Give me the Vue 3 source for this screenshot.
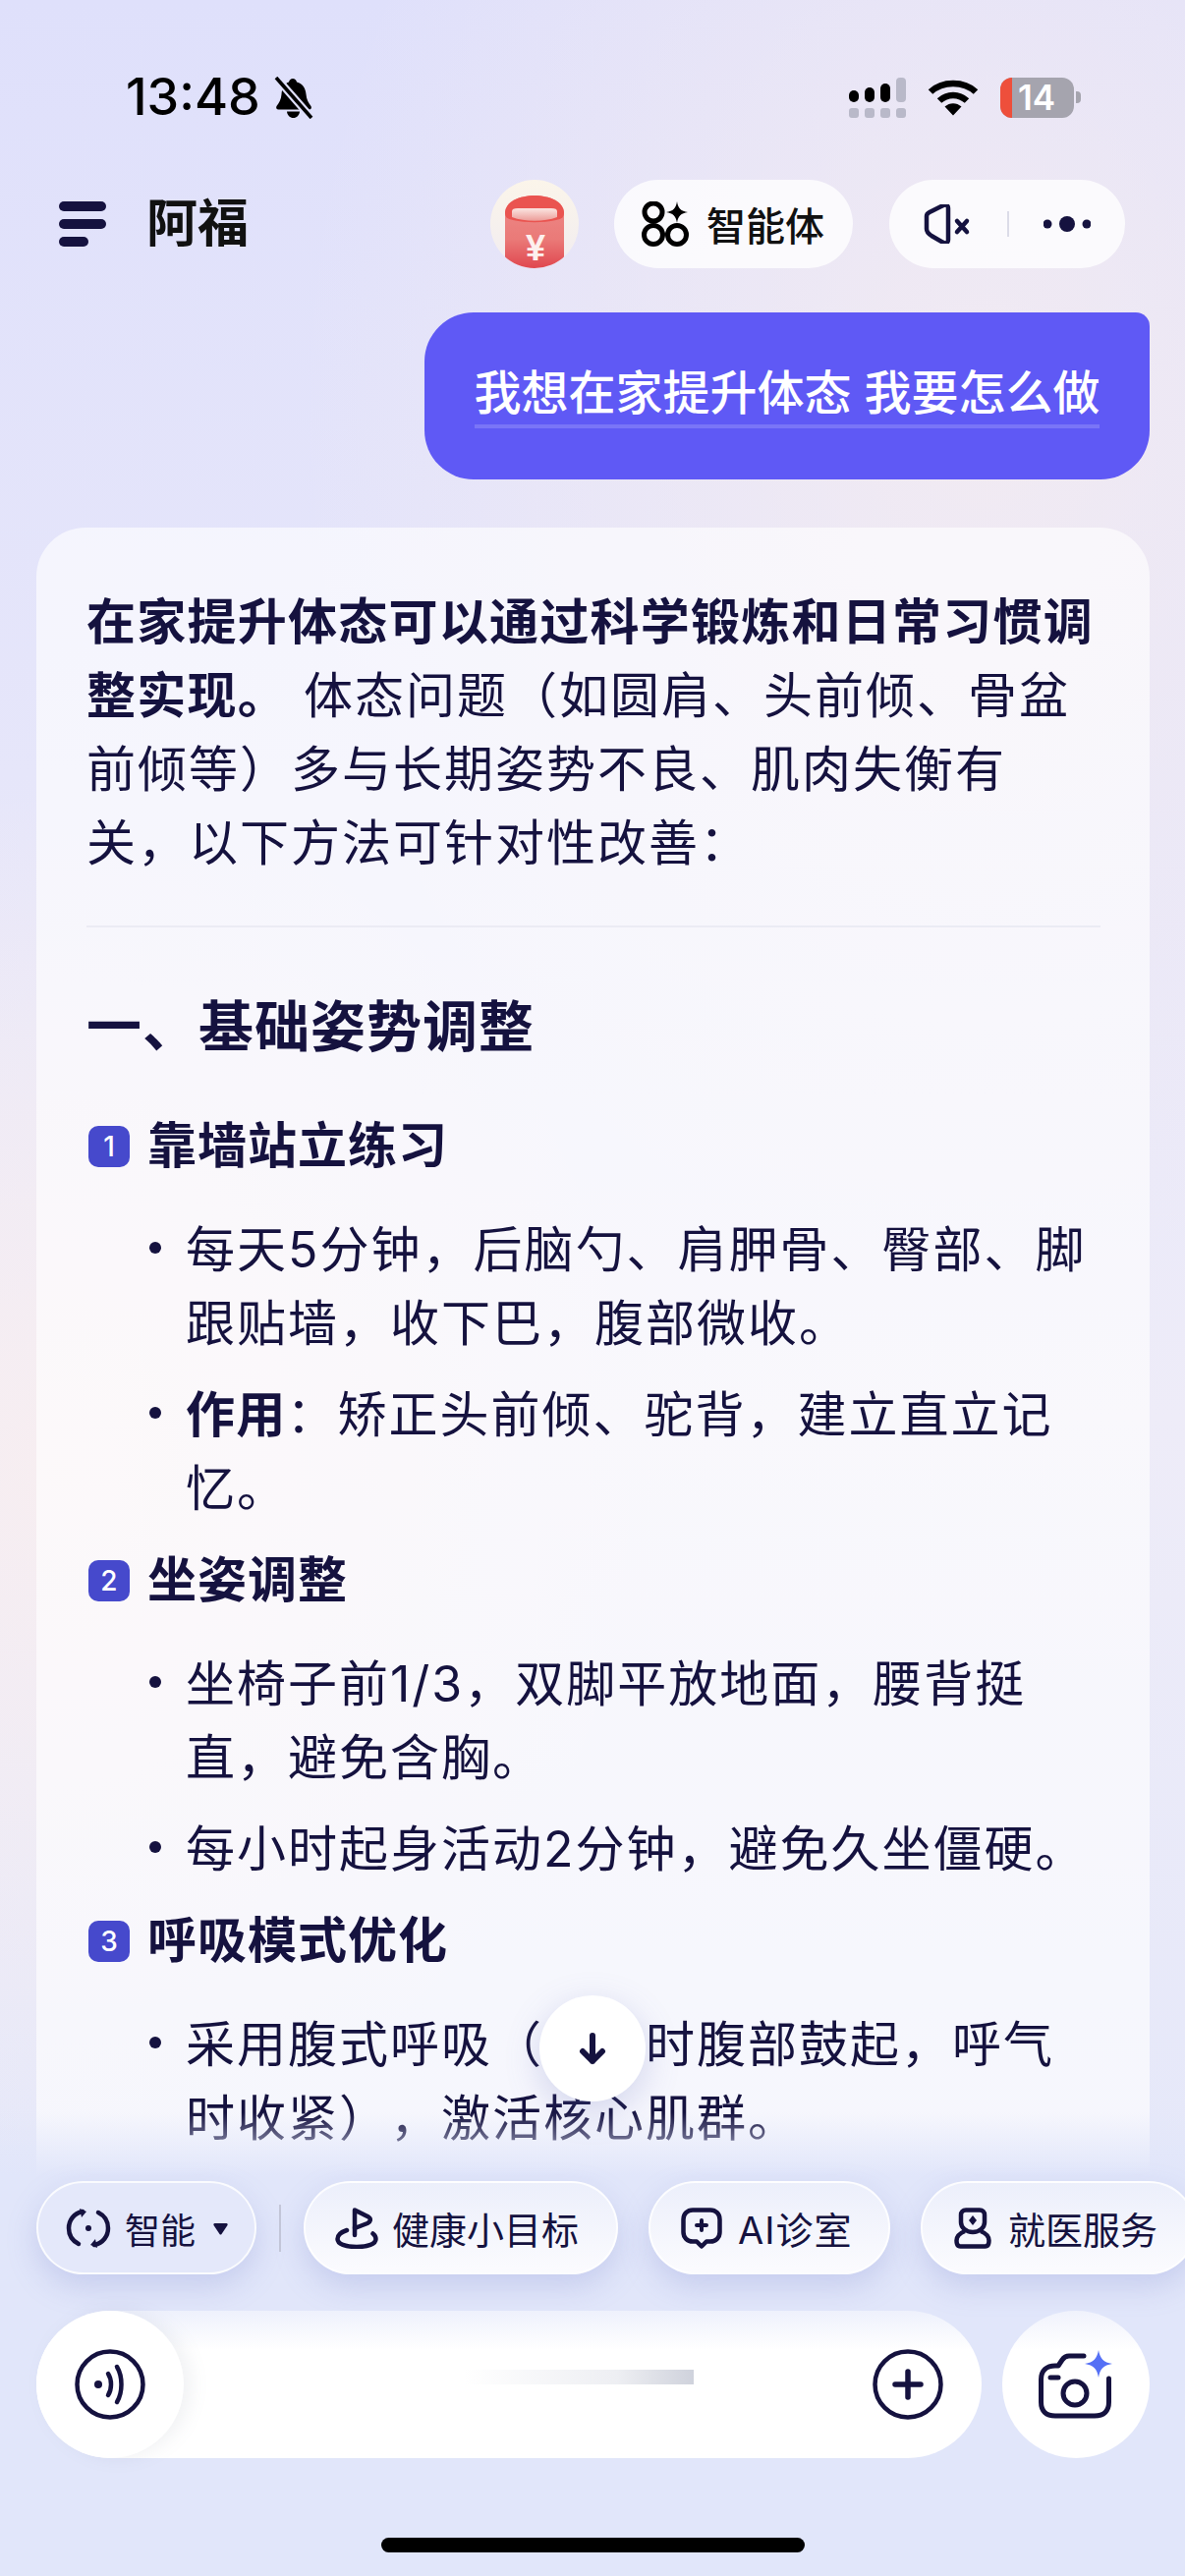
<template>
  <div class="phone">
    <div class="status-bar">
      <div class="status-left">
        <span class="time">13:48</span>
        <svg class="bell" width="40" height="43" viewBox="0 0 40 43">
          <path d="M19 2c2 0 3.500 1.500 4 3.500C29 7 32 12 32.500 18c.3 5 2.500 9 5 12 1 1.800 0 3.500-2 3.500H4.500c-2 0-3-1.700-2-3.500 2.500-3 4.700-7 5-12C8 12 10 7 15 5.500 15.500 3.500 17 2 19 2z" fill="#000"/>
          <path d="M13 35.500h13C25.500 39.500 23 42 19.500 42S13.500 39.500 13 35.500z" fill="#000"/>
          <path d="M2 1l36 41" stroke="#dfe0fb" stroke-width="8"/>
          <path d="M2 1l36 41" stroke="#000" stroke-width="3.600"/>
        </svg>
      </div>
      <div class="status-right">
        <svg width="58" height="41" viewBox="0 0 58 41">
          <rect x="0" y="13" width="10" height="12" rx="5" fill="#000"/>
          <rect x="16" y="10" width="10" height="15" rx="5" fill="#000"/>
          <rect x="32" y="6" width="10" height="19" rx="5" fill="#000"/>
          <rect x="48" y="0" width="10" height="25" rx="4" fill="#b9b9c9"/>
          <rect x="0" y="31" width="10" height="10" rx="3" fill="#b9b9c9"/>
          <rect x="16" y="31" width="10" height="10" rx="3" fill="#b9b9c9"/>
          <rect x="32" y="31" width="10" height="10" rx="3" fill="#b9b9c9"/>
          <rect x="48" y="31" width="10" height="10" rx="3" fill="#b9b9c9"/>
        </svg>
        <svg width="52" height="38" viewBox="0 0 52 38">
          <path d="M3 13.500C15 2 37 2 49 13.500" fill="none" stroke="#000" stroke-width="6.500"/>
          <path d="M12 22.500c8-7.500 20-7.500 28 0" fill="none" stroke="#000" stroke-width="6.500"/>
          <path d="M17.500 28.500c5-4.500 12-4.500 17 0L26 37.500z" fill="#000"/>
        </svg>
        <div class="battery-wrap">
          <div class="battery">
            <div class="battery-low"></div>
            <span class="battery-num">14</span>
          </div>
          <i class="battery-nub"></i>
        </div>
      </div>
    </div>

    <div class="top-bar">
      <svg class="menu-icon" width="48" height="46" viewBox="0 0 48 46">
        <rect x="0" y="0" width="48" height="10" rx="5" fill="#15123f"/>
        <rect x="0" y="18" width="48" height="10" rx="5" fill="#15123f"/>
        <rect x="0" y="36" width="30" height="10" rx="5" fill="#15123f"/>
      </svg>
      <span class="title">阿福</span>
      <svg class="avatar" width="90" height="90" viewBox="0 0 90 90">
        <defs>
          <linearGradient id="avbg" x1="0" y1="0" x2="0" y2="1">
            <stop offset="0" stop-color="#fbf5ea"/>
            <stop offset="1" stop-color="#f1ecf0"/>
          </linearGradient>
          <linearGradient id="can" x1="0" y1="0" x2="0" y2="1">
            <stop offset="0" stop-color="#ee8a88"/>
            <stop offset="0.6" stop-color="#ea7a78"/>
            <stop offset="1" stop-color="#e0474f"/>
          </linearGradient>
          <linearGradient id="lid" x1="0" y1="0" x2="0" y2="1">
            <stop offset="0" stop-color="#fbe6e2"/>
            <stop offset="1" stop-color="#ec9c98"/>
          </linearGradient>
          <clipPath id="avclip"><circle cx="45" cy="45" r="45"/></clipPath>
        </defs>
        <circle cx="45" cy="45" r="45" fill="url(#avbg)"/>
        <g clip-path="url(#avclip)">
          <path d="M15 34c0-24 60-24 60 0v56H15z" fill="url(#can)"/>
          <path d="M15 34c0-24 60-24 60 0 0 5-4 6-8 7-14 3-30 3-44 0-4-1-8-2-8-7z" fill="#ea5450"/>
          <path d="M22 32c0-2 2-3 6-3h34c4 0 6 1 6 3v6c-13 5-33 5-46 0z" fill="url(#lid)"/>
        </g>
        <text x="46" y="82" class="yen">¥</text>
      </svg>
      <div class="pill agent-pill">
        <svg width="48" height="46" viewBox="0 0 48 46">
          <g fill="none" stroke="#000" stroke-width="5">
            <circle cx="12" cy="11" r="9"/>
            <circle cx="12" cy="34" r="9.500"/>
            <circle cx="36" cy="34" r="9.500"/>
          </g>
          <path d="M36 0c1 7 4 10 11 11-7 1-10 4-11 11-1-7-4-10-11-11 7-1 10-4 11-11z" fill="#000"/>
        </svg>
        <span>智能体</span>
      </div>
      <div class="pill sound-pill">
        <svg width="50" height="40" viewBox="0 0 50 40">
          <path d="M4 12c0-2 1-3 3-4l14-7c3-1 5 0 5 3v32c0 3-2 4-5 3L9 32c-3-2-5-4-5-7z" fill="none" stroke="#15123f" stroke-width="4.500" stroke-linejoin="round"/>
          <path d="M35 17l10 11M45 17L35 28" stroke="#15123f" stroke-width="4.500" stroke-linecap="round"/>
        </svg>
        <i class="pill-sep"></i>
        <svg width="48" height="18" viewBox="0 0 48 18">
          <circle cx="4" cy="9" r="4.500" fill="#15123f"/>
          <circle cx="24" cy="9" r="8" fill="#15123f"/>
          <circle cx="44" cy="9" r="4.500" fill="#15123f"/>
        </svg>
      </div>
    </div>

    <div class="chat">
      <div class="user-row">
        <div class="user-bubble"><span class="user-text">我想在家提升体态 我要怎么做</span></div>
      </div>
      <div class="answer">
        <p class="intro"><b>在家提升体态可以通过科学锻炼和日常习惯调<br>整实现。</b> 体态问题（如圆肩、头前倾、骨盆<br>前倾等）多与长期姿势不良、肌肉失衡有<br>关，以下方法可针对性改善：</p>
        <div class="rule"></div>
        <h2 class="section">一、基础姿势调整</h2>
        <template v-for="item in items" :key="item.no">
          <div class="sub">
            <span class="badge">{{ item.no }}</span>
            <span>{{ item.title }}</span>
          </div>
          <ul class="points">
            <li v-for="(point, i) in item.points" :key="i">
              <b v-if="point.lead">{{ point.lead }}</b>
              <template v-for="(line, j) in point.lines" :key="j"><br v-if="j">{{ line }}</template>
            </li>
          </ul>
        </template>
      </div>
    </div>

    <div class="scroll-down">
      <svg width="28" height="33" viewBox="0 0 28 33">
        <path d="M14 3v26M4 19l10 10 10-10" fill="none" stroke="#15123f" stroke-width="6" stroke-linecap="round" stroke-linejoin="round"/>
      </svg>
    </div>

    <div class="dock">
      <div class="chips">
        <div class="chip chip-mode">
          <svg width="46" height="42" viewBox="0 0 46 42">
            <path d="M17 4C8 6 3 13 3 21c0 7 4 13 10 16" fill="none" stroke="#15123f" stroke-width="4.500" stroke-linecap="round"/>
            <path d="M29 38c9-2 14-9 14-17 0-7-4-13-10-16" fill="none" stroke="#15123f" stroke-width="4.500" stroke-linecap="round"/>
            <path d="M14 1l7 3-5 6zM32 41l-7-3 5-6z" fill="#15123f"/>
            <circle cx="23" cy="21" r="3" fill="#15123f"/>
          </svg>
          <span>智能</span>
          <svg class="caret" width="15" height="14" viewBox="0 0 15 14"><path d="M1.500 2h12c1 0 1.500 1 1 2L8.500 13c-.5.700-1.500.700-2 0L.5 4c-.5-1 0-2 1-2z" fill="#15123f"/></svg>
        </div>
        <i class="chip-sep"></i>
        <div class="chip chip-goal">
          <svg width="44" height="42" viewBox="0 0 44 42">
            <path d="M20 20V2.500l14 7c3 2 2 5-1 6.500l-13 5" fill="none" stroke="#15123f" stroke-width="4.500" stroke-linecap="round" stroke-linejoin="round"/>
            <path d="M20 20v8" stroke="#15123f" stroke-width="4.500" stroke-linecap="round"/>
            <path d="M12 23C6 25 2.500 28 2.500 32c0 5 8 8 19.500 8s19.500-3 19.500-8c0-2-1-4-3-5.500" fill="none" stroke="#15123f" stroke-width="4.500" stroke-linecap="round"/>
          </svg>
          <span>健康小目标</span>
        </div>
        <div class="chip chip-ai">
          <svg width="42" height="42" viewBox="0 0 42 42">
            <path d="M12 2.500h18c5.500 0 9.500 4 9.500 9.500v13c0 5.500-4 9.500-9.500 9.500h-4l-5 5-5-5h-4C6.500 34.500 2.500 30.500 2.500 25V12C2.500 6.500 6.500 2.500 12 2.500z" fill="none" stroke="#15123f" stroke-width="4.500" stroke-linejoin="round"/>
            <path d="M21 13v10M16 18h10" stroke="#15123f" stroke-width="4" stroke-linecap="round"/>
          </svg>
          <span class="ai-label">AI诊室</span>
        </div>
        <div class="chip chip-doc">
          <svg width="38" height="42" viewBox="0 0 38 42">
            <path d="M12 2.500h14c3 0 5 2 5 5V15c0 5-5 10-12 10S7 20 7 15V7.500c0-3 2-5 5-5z" fill="none" stroke="#15123f" stroke-width="4.500"/>
            <path d="M19 8l4 5-4 5-4-5z" fill="#15123f"/>
            <path d="M11 24c-5 2-8.500 5-8.500 9.500 0 3 1 6 4 6h25c3 0 4-3 4-6 0-4.500-3.500-7.500-8.500-9.500" fill="none" stroke="#15123f" stroke-width="4.500"/>
          </svg>
          <span>就医服务</span>
        </div>
      </div>

      <div class="input-row">
        <div class="input-box">
          <div class="voice-btn">
            <svg width="72" height="72" viewBox="0 0 72 72">
              <circle cx="36" cy="36" r="33.500" fill="none" stroke="#15123f" stroke-width="4.500"/>
              <circle cx="24" cy="36" r="4" fill="#15123f"/>
              <path d="M34 25c4 6 4 16 0 22M43 18c6 10 6 26 0 36" fill="none" stroke="#15123f" stroke-width="4.500" stroke-linecap="round"/>
            </svg>
          </div>
          <div class="input-ghost"></div>
          <svg class="plus" width="72" height="72" viewBox="0 0 72 72">
            <circle cx="36" cy="36" r="33.500" fill="none" stroke="#15123f" stroke-width="4.500"/>
            <path d="M36 23v26M23 36h26" stroke="#15123f" stroke-width="5.500" stroke-linecap="round"/>
          </svg>
        </div>
        <div class="camera-btn">
          <svg width="76" height="70" viewBox="0 0 76 70">
            <path d="M46 6H31c-3 0-5 1-7 4l-4 6h-3C8 16 2.500 21 2.500 30v23c0 9 5 14 14.500 14h40c9.500 0 14.500-5 14.500-14V29" fill="none" stroke="#15123f" stroke-width="5" stroke-linecap="round" stroke-linejoin="round"/>
            <path d="M12 28h8" stroke="#15123f" stroke-width="5" stroke-linecap="round"/>
            <circle cx="37" cy="44" r="12" fill="none" stroke="#15123f" stroke-width="5"/>
            <path d="M61 0c1.500 8.500 5 12.500 14 14-9 1.500-12.500 5-14 14-1.500-9-5-12.500-14-14 9-1.500 12.500-5.500 14-14z" fill="#5570f5"/>
          </svg>
        </div>
      </div>
      <div class="home-bar"></div>
    </div>
  </div>
</template>

<script setup>
const items = [
  {
    no: 1,
    title: '靠墙站立练习',
    points: [
      { lines: ['每天5分钟，后脑勺、肩胛骨、臀部、脚', '跟贴墙，收下巴，腹部微收。'] },
      { lead: '作用', lines: ['：矫正头前倾、驼背，建立直立记', '忆。'] }
    ]
  },
  {
    no: 2,
    title: '坐姿调整',
    points: [
      { lines: ['坐椅子前1/3，双脚平放地面，腰背挺', '直，避免含胸。'] },
      { lines: ['每小时起身活动2分钟，避免久坐僵硬。'] }
    ]
  },
  {
    no: 3,
    title: '呼吸模式优化',
    points: [
      { lines: ['采用腹式呼吸（吸气时腹部鼓起，呼气', '时收紧），激活核心肌群。'] }
    ]
  }
]
</script>

<style scoped>
.phone {
  position: relative;
  width: 1206px;
  height: 2622px;
  overflow: hidden;
  display: flex;
  flex-direction: column;
  color: #15123f;
  font-family: Inter, "Noto Sans CJK SC", sans-serif;
  background:
    radial-gradient(700px 900px at 1000px 420px, rgba(245, 236, 240, 0.8), transparent),
    radial-gradient(600px 700px at 60px 1500px, rgba(248, 238, 240, 0.9), transparent),
    linear-gradient(180deg, #dfe0fb 0%, #e6e6fa 30%, #eeecf8 55%, #e1e6fa 100%);
}

.status-bar {
  height: 78px;
  margin-top: 60px;
  padding: 0 106px 0 128px;
  display: flex;
  justify-content: space-between;
  align-items: center;
}
.status-left {
  display: flex;
  align-items: center;
  gap: 14px;
}
.time {
  font-size: 52px;
  font-weight: 500;
  color: #000;
  line-height: 1;
}
.status-right {
  display: flex;
  align-items: center;
  gap: 22px;
}
.battery-wrap {
  display: flex;
  align-items: center;
  gap: 2px;
}
.battery {
  width: 75px;
  height: 41px;
  border-radius: 12px;
  background: #a5a4ae;
  overflow: hidden;
  display: flex;
  align-items: center;
}
.battery-nub {
  width: 5px;
  height: 12px;
  border-radius: 0 4px 4px 0;
  background: #a5a4ae;
}
.battery-low {
  width: 12px;
  height: 100%;
  background: #ee4f3b;
}
.battery-num {
  margin-left: 6px;
  color: #fff;
  font-size: 35px;
  font-weight: 600;
  line-height: 1;
}

.top-bar {
  margin-top: 45px;
  height: 90px;
  padding: 0 61px 0 60px;
  display: flex;
  align-items: center;
}
.title {
  margin-left: 41px;
  font-size: 52px;
  font-weight: 700;
  color: #111;
  line-height: 1;
}
.avatar {
  margin-left: auto;
}
.pill {
  height: 90px;
  border-radius: 45px;
  background: rgba(255, 255, 255, 0.78);
  display: flex;
  align-items: center;
}
.agent-pill {
  margin-left: 36px;
  width: 243px;
  padding-left: 28px;
  gap: 18px;
  font-size: 40px;
  font-weight: 500;
  color: #111;
  box-sizing: border-box;
}
.sound-pill {
  margin-left: 37px;
  width: 240px;
  padding-left: 34px;
  box-sizing: border-box;
}
.pill-sep {
  width: 2px;
  height: 26px;
  margin: 0 35px 0 36px;
  background: #dcdce8;
}

.chat {
  padding: 45px 36px 0 37px;
  display: flex;
  flex-direction: column;
}
.user-row {
  display: flex;
  justify-content: flex-end;
}
.user-bubble {
  width: 738px;
  height: 170px;
  box-sizing: border-box;
  padding-top: 52px;
  text-align: center;
  border-radius: 50px 14px 50px 50px;
  background: #5f59f5;
}
.user-text {
  display: inline-block;
  padding-bottom: 2px;
  font-size: 48px;
  font-weight: 500;
  line-height: 60px;
  color: #fff;
  border-bottom: 4px solid #7a75f7;
}
.answer {
  margin-top: 49px;
  padding: 59px 50px 0 51px;
  border-radius: 50px 50px 0 0;
  background: rgba(255, 255, 255, 0.62);
  font-size: 50px;
  line-height: 75px;
  letter-spacing: 2px;
  text-spacing-trim: space-all;
  height: 1800px;
}
.intro {
  margin: 0;
}
.answer b {
  font-weight: 600;
  letter-spacing: 1.25px;
}
.rule {
  height: 2px;
  margin: 46px 0 61px;
  background: #ebebf4;
}
.section {
  margin: 0;
  font-size: 56px;
  line-height: 80px;
  font-weight: 600;
  letter-spacing: 1px;
}
.sub {
  margin-top: 44px;
  margin-left: 2px;
  display: flex;
  align-items: center;
  gap: 18px;
  font-weight: 600;
  letter-spacing: 1px;
}
.points + .sub {
  margin-top: 18px;
}
.badge {
  width: 42px;
  height: 42px;
  border-radius: 10px;
  background: #4649cc;
  color: #fff;
  font-size: 28px;
  font-weight: 500;
  line-height: 42px;
  letter-spacing: 0;
  text-align: center;
}
.points {
  list-style: none;
  margin: 31px 0 0;
  padding: 0 0 0 101px;
  display: flex;
  flex-direction: column;
  gap: 18px;
}
.points li {
  position: relative;
}
.points li::before {
  content: "";
  position: absolute;
  left: -37px;
  top: 29px;
  width: 12px;
  height: 12px;
  border-radius: 50%;
  background: #15123f;
}

.scroll-down {
  position: absolute;
  left: 549px;
  top: 2031px;
  z-index: 2;
  width: 108px;
  height: 108px;
  border-radius: 50%;
  background: #fff;
  box-shadow: 0 10px 34px rgba(110, 115, 190, 0.26);
  display: flex;
  align-items: center;
  justify-content: center;
}

.dock {
  position: absolute;
  left: 0;
  right: 0;
  bottom: 0;
  z-index: 1;
  padding-top: 90px;
  background: linear-gradient(180deg, rgba(225, 230, 250, 0) 20px, #e1e6fa 85px);
}
.chips {
  height: 95px;
  padding-left: 37px;
  display: flex;
  align-items: center;
}
.chip {
  flex-shrink: 0;
  height: 95px;
  box-sizing: border-box;
  border-radius: 48px;
  display: flex;
  align-items: center;
  font-size: 38px;
  background: linear-gradient(180deg, #eceffb, #fbfbfe);
  border: 2px solid rgba(255, 255, 255, 0.8);
  box-shadow: 0 12px 30px rgba(130, 140, 210, 0.28);
}
.chip-mode {
  width: 224px;
  padding-left: 28px;
  gap: 14px;
  font-size: 36px;
  background: #e4e8fa;
}
.caret {
  margin-left: 4px;
}
.chip-sep {
  flex-shrink: 0;
  width: 2px;
  height: 48px;
  margin: 0 23px;
  background: #c3c6d8;
}
.chip-goal {
  width: 320px;
  padding-left: 30px;
  gap: 14px;
}
.chip-ai {
  margin-left: 31px;
  width: 246px;
  padding-left: 31px;
  gap: 16px;
}
.ai-label {
  letter-spacing: 1px;
}
.chip-doc {
  margin-left: 31px;
  width: 280px;
  padding-left: 32px;
  gap: 17px;
}

.input-row {
  margin-top: 37px;
  padding: 0 36px 0 37px;
  display: flex;
  gap: 21px;
}
.input-box {
  width: 962px;
  height: 150px;
  border-radius: 75px;
  background: linear-gradient(180deg, #eef1fc 0, #fff 40px);
  display: flex;
  align-items: center;
  padding-right: 39px;
  box-sizing: border-box;
}
.voice-btn {
  width: 150px;
  height: 150px;
  flex-shrink: 0;
  border-radius: 50%;
  background: #fff;
  box-shadow: 8px 0 18px rgba(120, 125, 150, 0.1);
  display: flex;
  align-items: center;
  justify-content: center;
}
.input-ghost {
  flex: 1;
  height: 15px;
  align-self: flex-start;
  margin: 60px 182px 0 0;
  background: linear-gradient(90deg, rgba(205, 208, 220, 0) 55%, rgba(205, 208, 220, 0.35) 85%, #cfd2dc 100%);
}
.camera-btn {
  width: 150px;
  height: 150px;
  border-radius: 50%;
  background: linear-gradient(180deg, #f0f2fc 0, #fff 40px);
  display: flex;
  align-items: center;
  justify-content: center;
}
.home-bar {
  width: 431px;
  height: 15px;
  margin: 81px auto 24px;
  border-radius: 8px;
  background: #000;
}
</style>

<style>
.yen {
  font-family: "Liberation Sans", sans-serif;
  font-size: 36px;
  font-weight: 700;
  fill: #fdf0ee;
  text-anchor: middle;
}
</style>
